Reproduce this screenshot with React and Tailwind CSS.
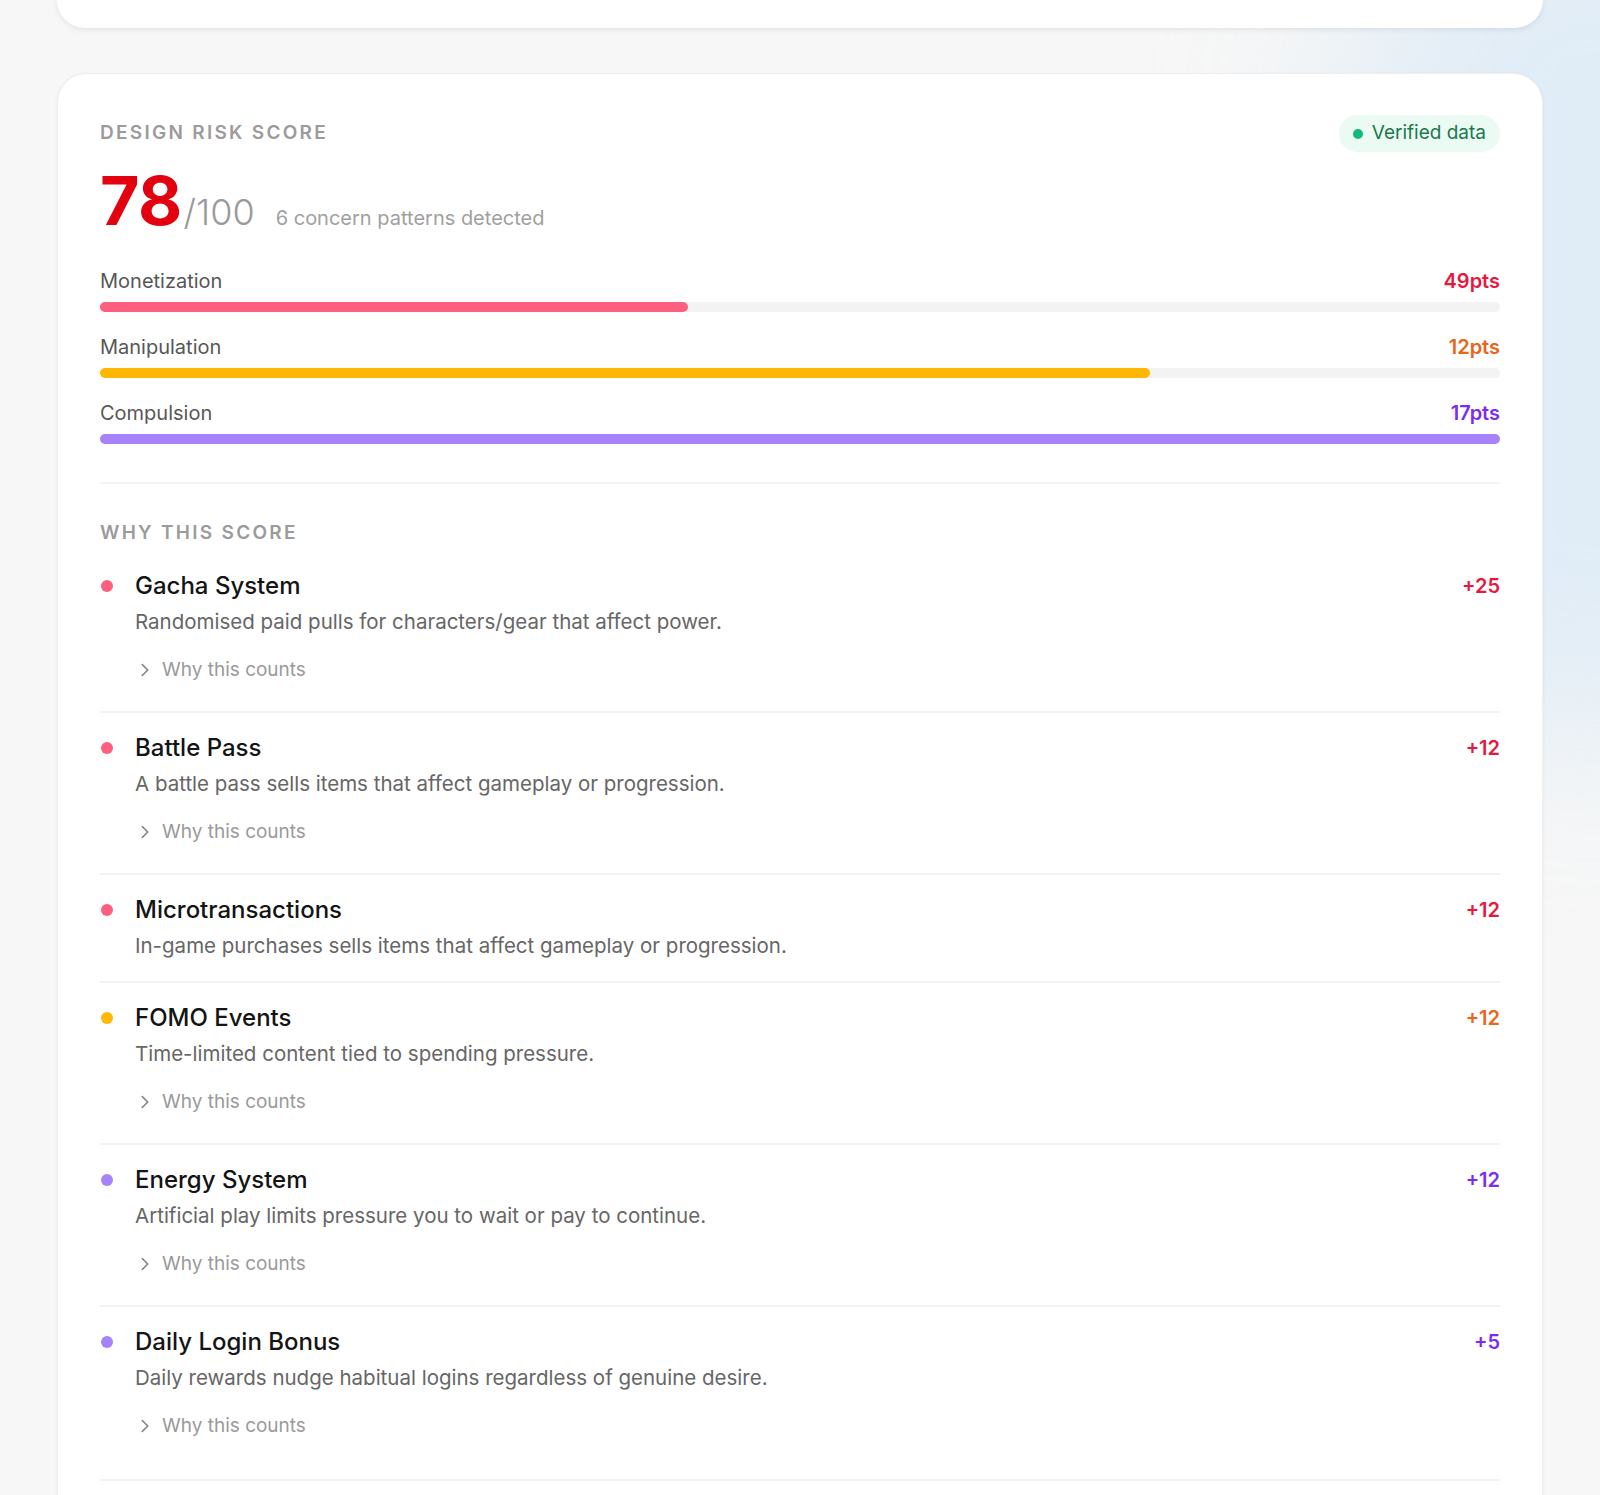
import React from "react";

const bars = [
  { label: "Monetization", pts: "49pts", pct: 42, bar: "bg-[#ff5f7e]", text: "text-[#e8173f]" },
  { label: "Manipulation", pts: "12pts", pct: 75, bar: "bg-[#ffb703]", text: "text-[#e8651a]" },
  { label: "Compulsion", pts: "17pts", pct: 100, bar: "bg-[#a683fa]", text: "text-[#7a2cf2]" },
];

const items = [
  { title: "Gacha System", pts: "+25", dot: "bg-[#ff5f7e]", text: "text-[#e8173f]", desc: "Randomised paid pulls for characters/gear that affect power.", why: true },
  { title: "Battle Pass", pts: "+12", dot: "bg-[#ff5f7e]", text: "text-[#e8173f]", desc: "A battle pass sells items that affect gameplay or progression.", why: true },
  { title: "Microtransactions", pts: "+12", dot: "bg-[#ff5f7e]", text: "text-[#e8173f]", desc: "In-game purchases sells items that affect gameplay or progression.", why: false },
  { title: "FOMO Events", pts: "+12", dot: "bg-[#ffb703]", text: "text-[#e8651a]", desc: "Time-limited content tied to spending pressure.", why: true },
  { title: "Energy System", pts: "+12", dot: "bg-[#a683fa]", text: "text-[#7a2cf2]", desc: "Artificial play limits pressure you to wait or pay to continue.", why: true },
  { title: "Daily Login Bonus", pts: "+5", dot: "bg-[#a683fa]", text: "text-[#7a2cf2]", desc: "Daily rewards nudge habitual logins regardless of genuine desire.", why: true },
];

function Chevron() {
  return (
    <svg width="22" height="22" viewBox="0 0 24 24" fill="none" stroke="#7f7f7f" strokeWidth="1.7" strokeLinecap="round" strokeLinejoin="round">
      <path d="m9 18 6-6-6-6" />
    </svg>
  );
}

export default function App() {
  return (
    <div className="relative h-[1495px] overflow-hidden bg-[#f7f7f7] [font-family:Inter,sans-serif]">
      <div className="absolute right-[-260px] top-[-150px] h-[900px] w-[520px] rounded-full bg-[#dbeaf6] opacity-80 blur-[90px]" />
      <div className="relative px-[57px]">
        <div className="h-[28px] rounded-b-[28px] bg-white shadow-[0_2px_6px_rgba(0,0,0,0.08)]" />
        <div className="mt-[45px] rounded-[30px] border border-[#efefef] bg-white px-[42px] pt-[41px] shadow-[0_1px_4px_rgba(0,0,0,0.05)]">
          <div className="flex h-[37px] items-center justify-between">
            <div className="text-[19px] font-semibold uppercase tracking-[0.12em] text-[#9b9b9b]">Design Risk Score</div>
            <div className="flex h-[37px] items-center gap-[9px] rounded-full bg-[#ebfaf2] pl-[14px] pr-[14px]">
              <span className="h-[10px] w-[10px] rounded-full bg-[#14b87a]" />
              <span className="text-[19px] text-[#18794e]">Verified data</span>
            </div>
          </div>

          <div className="mt-[14px] flex items-baseline">
            <span className="text-[68px] font-bold leading-none tracking-[-0.01em] text-[#e3000f]">78</span>
            <span className="ml-[2px] text-[36px] font-light leading-none text-[#9a9a9a]">/100</span>
            <span className="ml-[21px] text-xl leading-none text-[#a0a0a0]">6 concern patterns detected</span>
          </div>

          <div className="mt-[33px] flex flex-col gap-[21px]">
            {bars.map((b) => (
              <div key={b.label}>
                <div className="flex h-7 items-center justify-between text-xl">
                  <span className="text-[#575757]">{b.label}</span>
                  <span className={`font-semibold ${b.text}`}>{b.pts}</span>
                </div>
                <div className="mt-[7px] h-[10px] w-full rounded-full bg-[#f3f3f3]">
                  <div className={`h-full rounded-full ${b.bar}`} style={{ width: `${b.pct}%` }} />
                </div>
              </div>
            ))}
          </div>

          <div className="mt-[38px] h-[2px] bg-[#f3f3f3]" />

          <div className="mt-[35px] text-[19px] font-semibold uppercase leading-7 tracking-[0.12em] text-[#9b9b9b]">Why this score</div>

          <div className="mt-[4px]">
            {items.map((it) => (
              <div key={it.title} className="border-b-2 border-[#f2f2f2] pb-[21px] pt-[20px] last:pb-[33px]">
                <div className="flex items-start">
                  <span className={`ml-px mt-[9px] h-3 w-3 shrink-0 rounded-full ${it.dot}`} />
                  <div className="ml-[22px] flex-1">
                    <div className="flex h-[30px] items-center justify-between">
                      <span className="text-[24px] font-medium text-[#141414]">{it.title}</span>
                      <span className={`text-xl font-semibold ${it.text}`}>{it.pts}</span>
                    </div>
                    <p className="mt-[7px] text-[20.5px] leading-7 text-[#666]">{it.desc}</p>
                    {it.why && (
                      <div className="mb-[6px] mt-[20px] flex h-7 items-center gap-[6px] text-[19px] text-[#9a9a9a]">
                        <span className="-ml-px">
                          <Chevron />
                        </span>
                        <span>Why this counts</span>
                      </div>
                    )}
                  </div>
                </div>
              </div>
            ))}
          </div>
          <div className="h-[60px]" />
        </div>
      </div>
    </div>
  );
}
